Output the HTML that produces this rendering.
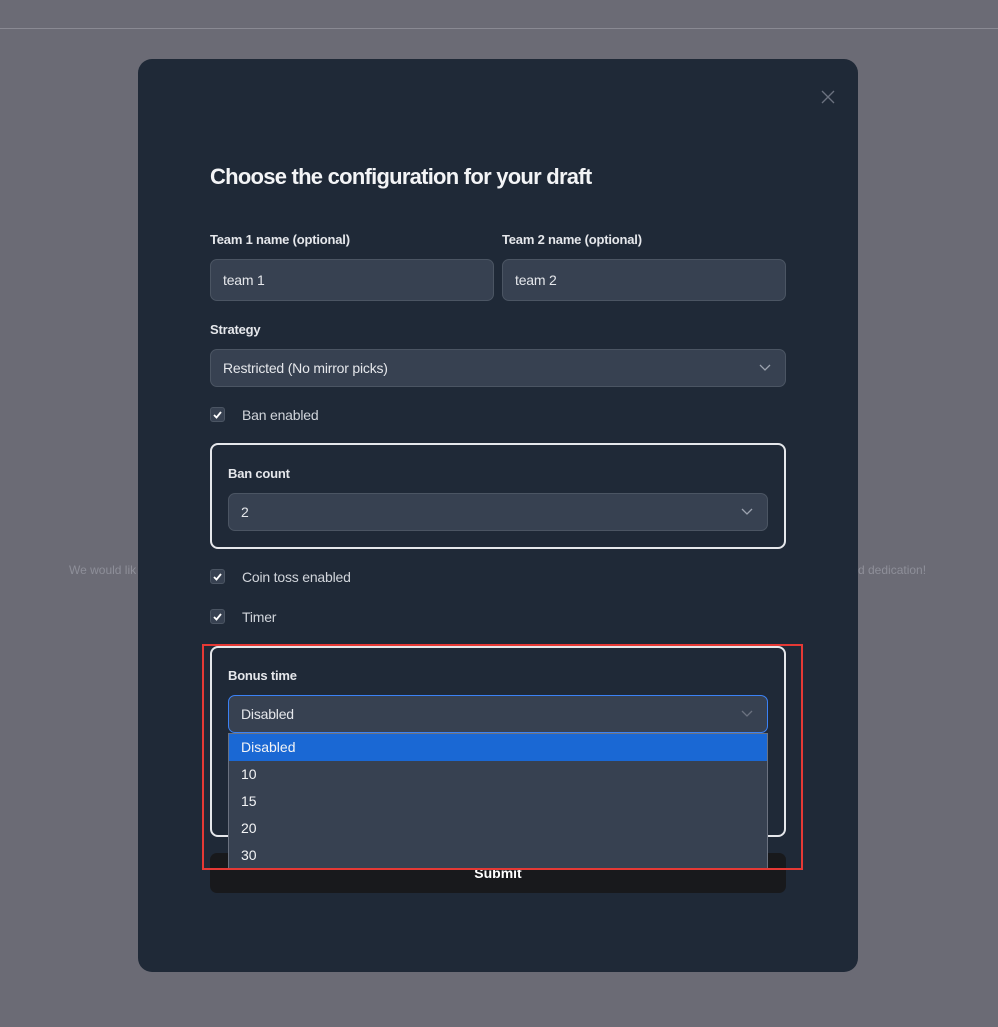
<!DOCTYPE html><html><head><style>
*{box-sizing:border-box;margin:0;padding:0}
body{width:998px;height:1027px;background:#6b6b75;font-family:"Liberation Sans",sans-serif;position:relative;overflow:hidden}
.a{position:absolute}
.line{left:0;top:28px;width:998px;height:1px;background:#8a8a93}
.bgt{top:563px;font-size:12px;color:#8e8f99}
.modal{left:138px;top:59px;width:720px;height:913px;background:#1f2937;border-radius:14px}
.title{left:210px;top:164px;font-size:22px;font-weight:bold;color:#f3f4f6;letter-spacing:-0.75px}
.lbl{font-size:13px;font-weight:bold;color:#e5e7eb;letter-spacing:-0.2px}
.inp{background:#374151;border:1px solid #4b5563;border-radius:7px;color:#e5e7eb;font-size:14px;padding-left:12px;display:flex;align-items:center;letter-spacing:-0.2px}
.chev{position:absolute;right:14px;top:50%;margin-top:-4px}
.cb{width:15px;height:15px;background:#374151;border:1px solid #4b5563;border-radius:3px}
.ct{font-size:14px;color:#d1d5db;letter-spacing:-0.2px}
.box{border:2px solid #e5e7eb;border-radius:8px}
.opt{left:229px;width:538px;height:27px;font-size:14px;color:#f3f4f6;padding-left:12px;line-height:27px}
</style></head><body>
<div class="a line"></div>
<div class="a bgt" style="left:69px">We would lik</div>
<div class="a bgt" style="left:858px">d dedication!</div>
<div class="a modal"></div>
<svg class="a" style="left:821px;top:90px" width="14" height="14"><path d="M1 1L13 13M13 1L1 13" stroke="#6b7280" stroke-width="1.3"/></svg>
<div class="a title">Choose the configuration for your draft</div>
<div class="a lbl" style="left:210px;top:232px">Team 1 name (optional)</div>
<div class="a lbl" style="left:502px;top:232px">Team 2 name (optional)</div>
<div class="a inp" style="left:210px;top:259px;width:284px;height:42px">team 1</div>
<div class="a inp" style="left:502px;top:259px;width:284px;height:42px">team 2</div>
<div class="a lbl" style="left:210px;top:322px">Strategy</div>
<div class="a inp" style="left:210px;top:349px;width:576px;height:38px">Restricted (No mirror picks)<svg class="chev" width="12" height="8"><path d="M1 1L6 6L11 1" stroke="#9ca3af" stroke-width="1.3" fill="none"/></svg></div>
<div class="a cb" style="left:210px;top:407px"><svg width="13" height="13"><path d="M3 7L5.5 9.5L10 4" stroke="#fff" stroke-width="1.8" fill="none"/></svg></div>
<div class="a ct" style="left:242px;top:407px">Ban enabled</div>
<div class="a box" style="left:210px;top:443px;width:576px;height:106px"></div>
<div class="a lbl" style="left:228px;top:466px">Ban count</div>
<div class="a inp" style="left:228px;top:493px;width:540px;height:38px">2<svg class="chev" width="12" height="8"><path d="M1 1L6 6L11 1" stroke="#9ca3af" stroke-width="1.3" fill="none"/></svg></div>
<div class="a cb" style="left:210px;top:569px"><svg width="13" height="13"><path d="M3 7L5.5 9.5L10 4" stroke="#fff" stroke-width="1.8" fill="none"/></svg></div>
<div class="a ct" style="left:242px;top:569px">Coin toss enabled</div>
<div class="a cb" style="left:210px;top:609px"><svg width="13" height="13"><path d="M3 7L5.5 9.5L10 4" stroke="#fff" stroke-width="1.8" fill="none"/></svg></div>
<div class="a ct" style="left:242px;top:609px">Timer</div>
<div class="a box" style="left:210px;top:646px;width:576px;height:191px"></div>
<div class="a lbl" style="left:228px;top:668px">Bonus time</div>
<div class="a inp" style="left:228px;top:695px;width:540px;height:38px;border-color:#3b82f6">Disabled<svg class="chev" width="12" height="8"><path d="M1 1L6 6L11 1" stroke="#6b7280" stroke-width="1.3" fill="none"/></svg></div>
<div class="a" style="left:210px;top:853px;width:576px;height:40px;background:#18191c;border-radius:7px;color:#fff;font-weight:bold;font-size:14px;text-align:center;line-height:40px">Submit</div>
<div class="a" style="left:228px;top:733px;width:540px;height:136px;background:#374151;border:1px solid #6b7280;border-bottom:none"></div>
<div class="a opt" style="top:734px;background:#1a68d4">Disabled</div>
<div class="a opt" style="top:761px">10</div>
<div class="a opt" style="top:788px">15</div>
<div class="a opt" style="top:815px">20</div>
<div class="a opt" style="top:842px">30</div>
<div class="a" style="left:202px;top:644px;width:601px;height:226px;border:2px solid #e53935"></div>
</body></html>
